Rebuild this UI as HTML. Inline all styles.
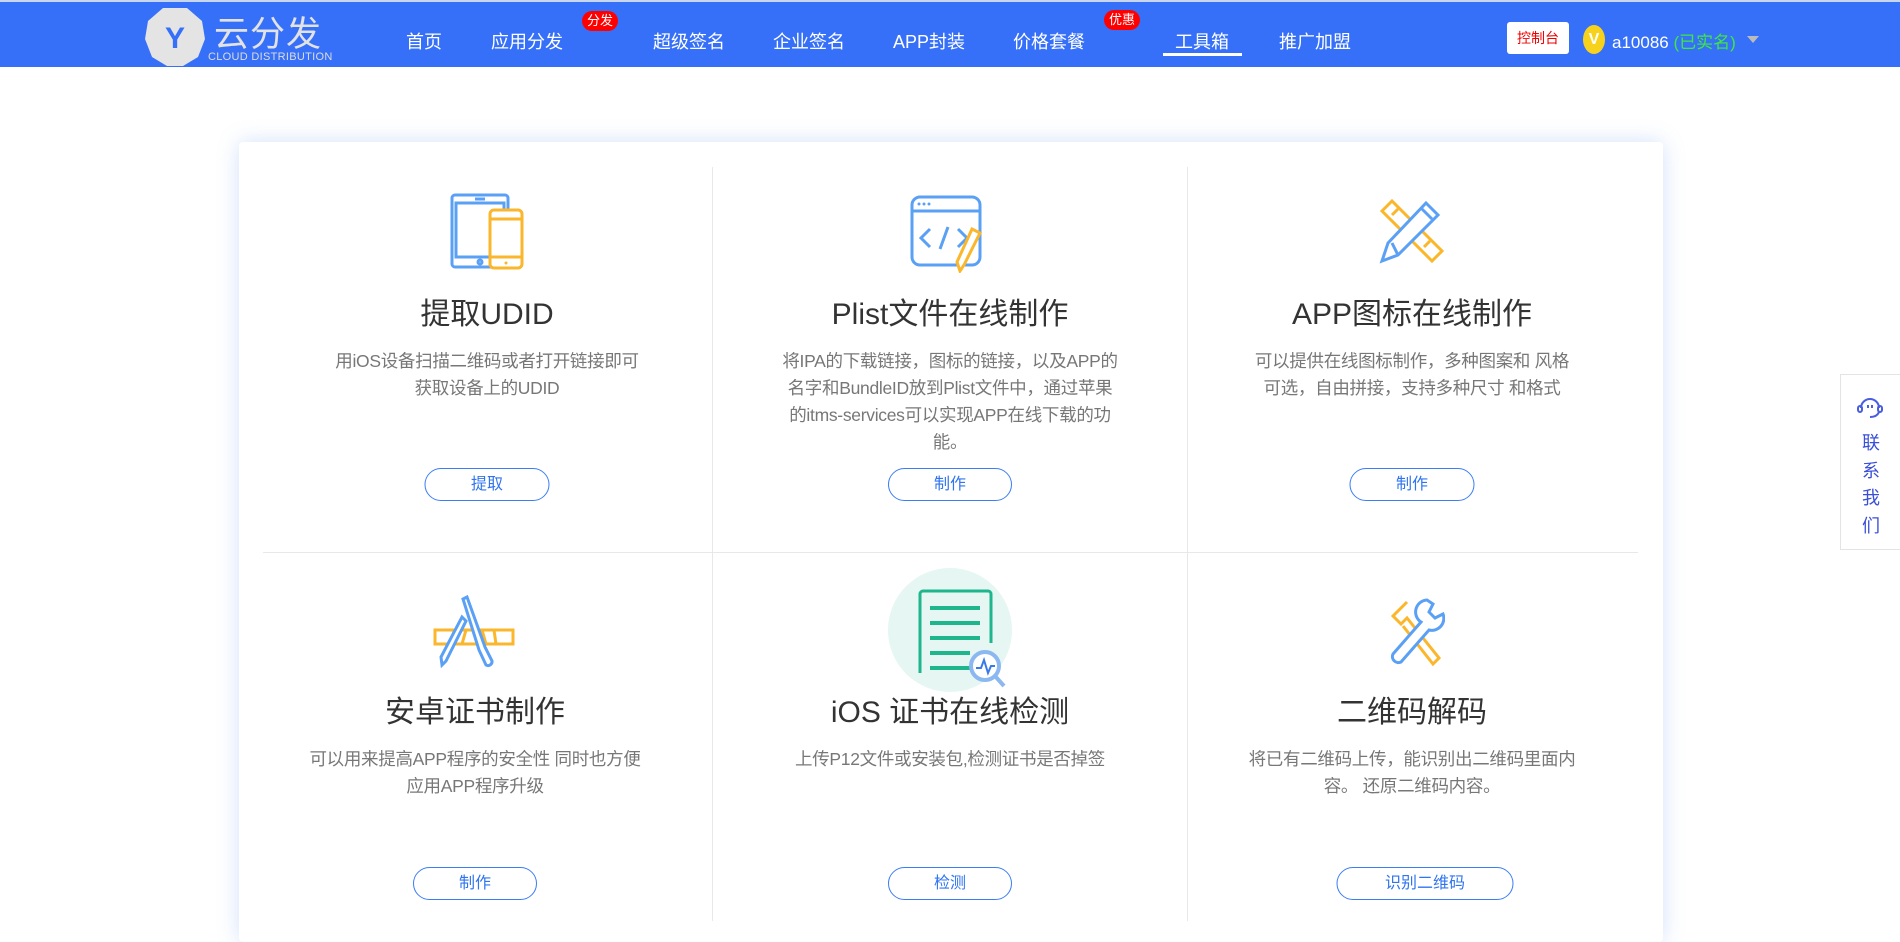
<!DOCTYPE html>
<html><head><meta charset="utf-8"><style>
*{margin:0;padding:0;box-sizing:border-box}
body{width:1900px;height:921px;overflow:hidden;background:#fff;font-family:"Liberation Sans","Noto Sans CJK SC",sans-serif;position:relative}
.hdr{position:absolute;left:0;top:0;width:1900px;height:67px;background:#3670f9;border-top:2px solid #c9d6f0}
.a{position:absolute}
.nav{position:absolute;top:26px;color:#fff;font-size:18px;transform:translateX(-50%);white-space:nowrap}
.badge{position:absolute;background:#f00;color:#fff;font-size:13px;border-radius:11px;height:20px;line-height:20px;padding:0 5px}
.card{position:absolute;left:239px;top:142px;width:1424px;height:800px;background:#fff;box-shadow:0 0 22px rgba(110,160,240,.3);border-radius:4px}
.vl{position:absolute;width:1px;background:#e8e8e8}
.cell{position:absolute;width:440px;transform:translateX(-50%);text-align:center}
.t{font-size:30px;color:#333;line-height:36px}
.d{font-size:17.5px;color:#777;line-height:27px;margin:15px auto 0;width:325px;letter-spacing:-.3px}
.btn{position:absolute;height:33px;border:1px solid #3b7df5;border-radius:17px;color:#2f74f0;font-size:16px;text-align:center;line-height:31px;transform:translateX(-50%)}
</style></head><body>
<div class="hdr">
<svg class="a" style="left:145px;top:5px" width="60" height="60" viewBox="0 0 60 60"><polygon points="18,1 42,1 57,14 60,32 53,50 38,59 22,59 7,50 0,32 3,14" fill="#e4e4e4"/><text x="30" y="41" text-anchor="middle" font-family="Liberation Sans" font-weight="bold" font-size="30" fill="#3670f9">Y</text></svg>
<div class="a" style="left:214px;top:4px;font-size:35px;color:#e2e2e2;letter-spacing:1px">云分发</div>
<div class="a" style="left:208px;top:49px;font-size:11px;color:#dcdcdc;letter-spacing:.3px">CLOUD DISTRIBUTION</div>
<div class="nav" style="left:424px">首页</div>
<div class="nav" style="left:527px">应用分发</div>
<div class="badge" style="left:582px;top:9px">分发</div>
<div class="nav" style="left:689px">超级签名</div>
<div class="nav" style="left:809px">企业签名</div>
<div class="nav" style="left:929px">APP封装</div>
<div class="nav" style="left:1049px">价格套餐</div>
<div class="badge" style="left:1104px;top:8px">优惠</div>
<div class="nav" style="left:1202px">工具箱</div>
<div class="a" style="left:1163px;top:51px;width:79px;height:3px;background:#fff"></div>
<div class="nav" style="left:1315px">推广加盟</div>
<div class="a" style="left:1507px;top:20px;width:62px;height:32px;background:#fff;border-radius:3px;color:#e00;font-size:14px;text-align:center;line-height:32px">控制台</div>
<div class="a" style="left:1583px;top:23px;width:22px;height:29px;border-radius:50%;background:#f7d21c;color:#fff;font-size:16px;text-align:center;line-height:29px;font-weight:bold">V</div>
<div class="a" style="left:1612px;top:26px;font-size:17px;color:#fff">a10086 <span style="color:#3fe83f">(已实名)</span></div>
<div class="a" style="left:1747px;top:34px;border-left:6px solid transparent;border-right:6px solid transparent;border-top:7px solid #bbb"></div>
</div>

<div class="card"></div>
<div class="vl" style="left:712px;top:167px;height:754px"></div>
<div class="vl" style="left:1187px;top:167px;height:754px"></div>
<div class="a" style="left:263px;top:552px;width:1375px;height:1px;background:#e8e8e8"></div>

<svg class="a" style="left:450px;top:193px" width="76" height="78" viewBox="0 0 76 78" fill="none" stroke-width="3"><rect x="2" y="2" width="56" height="72" rx="3" stroke="#5aa0f5"/><rect x="6" y="10" width="48" height="54" stroke="#5aa0f5"/><line x1="25" y1="6" x2="35" y2="6" stroke="#5aa0f5"/><circle cx="30" cy="69" r="2" stroke="#5aa0f5"/><rect x="40" y="17" width="32" height="58" rx="4" fill="#fff" stroke="#fbb72c"/><line x1="40" y1="26" x2="72" y2="26" stroke="#fbb72c"/><line x1="40" y1="64" x2="72" y2="64" stroke="#fbb72c"/><circle cx="56" cy="70" r="1.5" fill="#fbb72c" stroke="none"/></svg>
<svg class="a" style="left:910px;top:195px" width="80" height="78" viewBox="0 0 80 78" fill="none" stroke-width="3"><rect x="2" y="2" width="68" height="68" rx="8" stroke="#5aa0f5"/><line x1="2" y1="16" x2="70" y2="16" stroke="#5aa0f5"/><circle cx="9" cy="9" r="1.5" fill="#5aa0f5"/><circle cx="14" cy="9" r="1.5" fill="#5aa0f5"/><circle cx="19" cy="9" r="1.5" fill="#5aa0f5"/><polyline points="20,34 11,43 20,52" stroke="#5aa0f5"/><polyline points="48,34 57,43 48,52" stroke="#5aa0f5"/><line x1="38" y1="32" x2="30" y2="54" stroke="#5aa0f5"/><path d="M62 34 L70 38 L54 70 L50 76 L47 67 Z" fill="#fff" stroke="#fbb72c"/></svg>
<svg class="a" style="left:1378px;top:197px" width="68" height="68" viewBox="0 0 68 68" fill="none" stroke-width="3"><path d="M4 14 L14 4 L64 54 L54 64 Z" stroke="#fbb72c"/><line x1="14" y1="18" x2="20" y2="12" stroke="#fbb72c"/><line x1="46" y1="50" x2="52" y2="44" stroke="#fbb72c"/><path d="M48 6 L60 18 L20 58 L4 64 L10 46 Z" fill="#fff" stroke="#5aa0f5"/><line x1="14" y1="46" x2="20" y2="58" stroke="#5aa0f5"/><line x1="44" y1="12" x2="54" y2="22" stroke="#5aa0f5"/></svg>

<svg class="a" style="left:432px;top:595px" width="84" height="76" viewBox="0 0 84 76" fill="none" stroke-width="3"><rect x="3" y="35" width="78" height="14" stroke="#fbb72c"/><path d="M22 35 L34 35 L30 49 L20 49Z" fill="#fff" stroke="#fbb72c"/><path d="M50 35 L62 35 L64 49 L54 49Z" fill="#fff" stroke="#fbb72c"/><path d="M35 2 L53 52 L60 66 A4 4 0 0 1 54 70 L47 55 L31 4 Z" fill="#fff" stroke="#5aa0f5"/><path d="M30 22 L34 26 L14 66 L10 70 L9 62 Z" fill="#fff" stroke="#5aa0f5"/></svg>
<div class="a" style="left:888px;top:568px;width:124px;height:124px;border-radius:50%;background:#e6f6f2"></div>
<svg class="a" style="left:900px;top:588px" width="110" height="105" viewBox="0 0 110 105" fill="none"><path d="M20 85 V6 A3 3 0 0 1 23 3 H88 A3 3 0 0 1 91 6 V55" stroke="#1fb68e" stroke-width="3"/><g stroke="#1fb68e" stroke-width="4"><line x1="30" y1="20" x2="80" y2="20"/><line x1="30" y1="35" x2="80" y2="35"/><line x1="30" y1="50" x2="80" y2="50"/><line x1="30" y1="65" x2="70" y2="65"/><line x1="30" y1="80" x2="70" y2="80"/></g><circle cx="85" cy="78" r="14" fill="#fff" stroke="#8bb8f0" stroke-width="4"/><line x1="95" y1="88" x2="104" y2="98" stroke="#8bb8f0" stroke-width="4"/><polyline points="76,80 81,80 84,72 88,85 91,78 95,78" stroke="#3a7ae8" stroke-width="2"/></svg>
<svg class="a" style="left:1385px;top:596px" width="60" height="72" viewBox="0 0 60 72" fill="none" stroke-width="3"><path d="M22 6 L8 20 L16 28 L22 22 L54 62 L48 68 L18 30" stroke="#fbb72c"/><path d="M42 4 A12 12 0 0 0 36 26 L8 58 A6 6 0 0 0 16 66 L44 34 A12 12 0 0 0 58 18 L50 22 L44 16 L48 8 Z" fill="#fff" stroke="#5aa0f5"/></svg>

<div class="cell" style="left:487px;top:297px"><div class="t">提取UDID</div><div class="d" style="width:315px">用iOS设备扫描二维码或者打开链接即可获取设备上的UDID</div></div>
<div class="cell" style="left:950px;top:297px"><div class="t">Plist文件在线制作</div><div class="d" style="width:340px">将IPA的下载链接，图标的链接，以及APP的名字和BundleID放到Plist文件中，通过苹果的itms-services可以实现APP在线下载的功能。</div></div>
<div class="cell" style="left:1412px;top:297px"><div class="t">APP图标在线制作</div><div class="d" style="width:328px">可以提供在线图标制作，多种图案和 风格可选，自由拼接，支持多种尺寸 和格式</div></div>
<div class="btn" style="left:487px;top:468px;width:125px">提取</div>
<div class="btn" style="left:950px;top:468px;width:124px">制作</div>
<div class="btn" style="left:1412px;top:468px;width:125px">制作</div>

<div class="cell" style="left:475px;top:695px"><div class="t">安卓证书制作</div><div class="d" style="width:345px">可以用来提高APP程序的安全性 同时也方便应用APP程序升级</div></div>
<div class="cell" style="left:950px;top:695px"><div class="t">iOS 证书在线检测</div><div class="d" style="width:360px">上传P12文件或安装包,检测证书是否掉签</div></div>
<div class="cell" style="left:1412px;top:695px"><div class="t">二维码解码</div><div class="d" style="width:338px">将已有二维码上传，能识别出二维码里面内容。 还原二维码内容。</div></div>
<div class="btn" style="left:475px;top:867px;width:124px">制作</div>
<div class="btn" style="left:950px;top:867px;width:124px">检测</div>
<div class="btn" style="left:1425px;top:867px;width:177px">识别二维码</div>

<div class="a" style="left:1840px;top:374px;width:62px;height:176px;background:#fff;border:1px solid #e4e4e4"></div>
<svg class="a" style="left:1857px;top:395px" width="26" height="24" viewBox="0 0 26 24" fill="none" stroke="#4a5ee0" stroke-width="2"><path d="M4 13 A9 9 0 0 1 22 13"/><rect x="1" y="11" width="4" height="6" rx="2"/><rect x="21" y="11" width="4" height="6" rx="2"/><path d="M22 17 Q20 22 13 22"/><line x1="11" y1="10" x2="11" y2="13"/><line x1="15" y1="10" x2="15" y2="13"/></svg>
<div class="a" style="left:1858px;top:430px;width:26px;font-size:18px;line-height:27.5px;color:#3a4fd8;text-align:center">联<br>系<br>我<br>们</div>
</body></html>
